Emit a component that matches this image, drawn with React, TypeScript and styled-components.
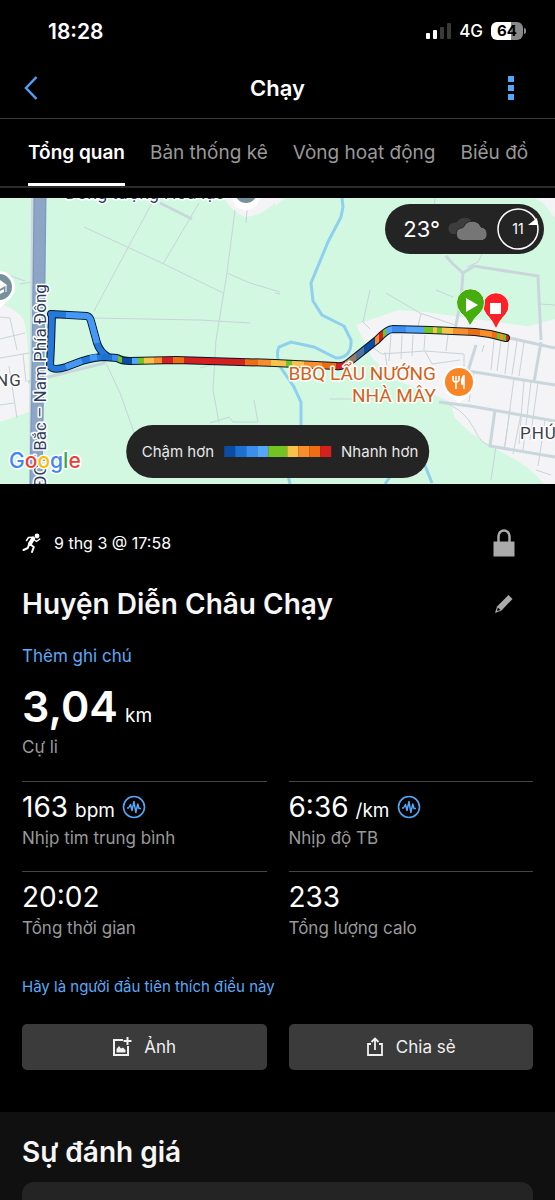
import React from "react";
import styled, { createGlobalStyle } from "styled-components";

const GlobalStyle = createGlobalStyle`
  *, *::before, *::after { box-sizing: border-box; }
  body {
    margin: 0;
    background: #000;
    color: #fff;
    font-family: Inter, "Liberation Sans", sans-serif;
  }
  button { font: inherit; color: inherit; background: none; border: 0; padding: 0; cursor: pointer; }
  a { color: #5aabf8; text-decoration: none; }
  h1, h2, p, dl, dt, dd { margin: 0; }
  svg { display: block; }
`;

const Page = styled.div`
  min-height: 100vh;
  display: flex;
  flex-direction: column;
  overflow: hidden;
`;

const StatusBar = styled.div`
  display: flex;
  align-items: center;
  justify-content: space-between;
  height: 62px;
  padding: 0 29px 0 48px;
`;

const Clock = styled.time`
  font-size: 21px;
  font-weight: 600;
`;

const StatusIcons = styled.div`
  display: flex;
  align-items: center;
  gap: 8px;
  font-size: 17px;
  font-weight: 500;
`;

const Battery = styled.span`
  position: relative;
  width: 32px;
  height: 18px;
  margin-right: 3px;
  border-radius: 6px;
  background: linear-gradient(90deg, #fff 64%, #888 64%);
  color: #000;
  font-size: 15px;
  font-weight: 700;
  line-height: 18px;
  text-align: center;

  &::after {
    content: "";
    position: absolute;
    right: -3px;
    top: 6px;
    width: 2px;
    height: 6px;
    border-radius: 0 2px 2px 0;
    background: #888;
  }
`;

const Header = styled.header`
  display: grid;
  grid-template-columns: 40px 1fr 40px;
  align-items: center;
  height: 57px;
  padding: 0 20px 4px;
  border-bottom: 1px solid #3c3c3c;
`;

const Title = styled.h1`
  font-size: 22px;
  font-weight: 600;
  line-height: 28px;
  text-align: center;
`;

const HeaderButton = styled.button<{ $end?: boolean }>`
  display: flex;
  height: 32px;
  align-items: center;
  justify-content: ${(p) => (p.$end ? "center" : "flex-start")};
  padding: ${(p) => (p.$end ? "0 8px 0 0" : "0 4px")};
`;

const Tabs = styled.nav`
  display: flex;
  gap: 25px;
  height: 69px;
  padding: 0 24px 0 28px;
  border-bottom: 2px solid #2c2c2c;
`;

const Tab = styled.button<{ $active?: boolean }>`
  height: 67px;
  padding-top: 3px;
  border-bottom: 3px solid ${(p) => (p.$active ? "#fff" : "transparent")};
  color: ${(p) => (p.$active ? "#fff" : "#999")};
  font-size: 19px;
  font-weight: ${(p) => (p.$active ? 600 : 400)};
  white-space: nowrap;
`;

const MapPanel = styled.section`
  position: relative;
  margin-top: 10px;
  overflow: hidden;
`;

const MapDrawing = styled.svg`
  width: 100%;
  height: auto;
`;

const Weather = styled.div`
  position: absolute;
  top: 6px;
  right: 11px;
  display: flex;
  align-items: center;
  gap: 7px;
  height: 50px;
  padding: 0 4px 0 18px;
  border-radius: 25px;
  background: #242424;
  font-size: 22px;
`;

const Legend = styled.div`
  position: absolute;
  left: 50%;
  bottom: 6px;
  transform: translateX(-50%);
  display: flex;
  align-items: center;
  gap: 10px;
  height: 53px;
  padding: 0 11px 0 16px;
  border-radius: 27px;
  background: #242424;
  color: #e8e8e8;
  font-size: 15px;
  white-space: nowrap;
`;

const Scale = styled.span`
  display: flex;
`;

const Swatch = styled.i<{ $color: string; $wide?: boolean }>`
  width: ${(p) => (p.$wide ? 19 : 11)}px;
  height: 11px;
  background: ${(p) => p.$color};
`;

const Summary = styled.main`
  display: flex;
  flex-direction: column;
  padding: 43px 22px 42px;
`;

const Row = styled.div`
  display: flex;
  align-items: center;
  justify-content: space-between;
`;

const When = styled.p`
  display: flex;
  align-items: center;
  gap: 13px;
  font-size: 16px;
  line-height: 32px;
`;

const IconButton = styled.button`
  display: flex;
  align-items: center;
  justify-content: center;
  width: 58px;
  height: 32px;
`;

const Heading = styled.h2`
  font-size: 28px;
  font-weight: 600;
  line-height: 40px;
  color: #f6f6f6;
`;

const NameRow = styled(Row)`
  margin-top: 25px;
`;

const NoteLink = styled.a`
  margin-top: 20px;
  font-size: 17px;
  line-height: 24px;
`;

const Stat = styled.div<{ $lead?: boolean }>`
  display: flex;
  flex-direction: column;
  height: ${(p) => (p.$lead ? "auto" : "90px")};
  padding-top: ${(p) => (p.$lead ? 10 : 7)}px;
  border-top: ${(p) => (p.$lead ? "0" : "1px solid #444")};
`;

const Value = styled.dd<{ $lead?: boolean }>`
  display: flex;
  align-items: baseline;
  gap: 7px;
  height: ${(p) => (p.$lead ? 56 : 36)}px;
  font-size: ${(p) => (p.$lead ? 43 : 28)}px;
  font-weight: ${(p) => (p.$lead ? 600 : 400)};
  line-height: ${(p) => (p.$lead ? 56 : 36)}px;
`;

const Unit = styled.span`
  font-size: 19px;
  font-weight: 400;
  line-height: 24px;
`;

const Label = styled.dt`
  order: 1;
  color: #999;
  font-size: 17px;
  line-height: 26px;
`;

const PulseBadge = styled.svg`
  align-self: center;
`;

const StatGrid = styled.dl`
  display: grid;
  grid-template-columns: 1fr 1fr;
  column-gap: 22px;
  margin-top: 21px;
`;

const LikeLink = styled.a`
  margin-top: 14px;
  font-size: 15px;
  line-height: 24px;
`;

const Actions = styled.div`
  display: grid;
  grid-template-columns: 1fr 1fr;
  gap: 22px;
  margin-top: 25px;
`;

const ActionButton = styled.button`
  display: flex;
  align-items: center;
  justify-content: center;
  gap: 12px;
  height: 46px;
  border-radius: 5px;
  background: #3b3b3b;
  color: #f0f0f0;
  font-size: 17px;
`;

const Review = styled.section`
  flex: 1;
  padding: 20px 22px 0;
  background: #101010;
`;

const ReviewCard = styled.div`
  height: 60px;
  margin-top: 10px;
  margin-bottom: -43px;
  border-radius: 12px;
  background: #242424;
`;

const PACE = ["#0a4da2", "#1b70d0", "#3b8ef0", "#55a5fb", "#74c322", "#f8c24a", "#f98c2b", "#ee6c12", "#d6201f"];

/* Pace bands along the straight part of the run: [end x, colour] */
const BANDS: [number, string][] = [
  [112, PACE[1]], [118, PACE[2]], [122, PACE[4]], [132, PACE[0]], [138, PACE[3]], [144, PACE[4]],
  [154, PACE[5]], [162, PACE[6]], [173, PACE[8]], [184, PACE[7]], [245, PACE[8]], [258, PACE[7]],
  [271, PACE[6]], [286, PACE[5]], [292, PACE[4]], [304, PACE[5]], [322, PACE[6]], [336, PACE[7]],
  [345, PACE[8]], [350, "#c09070"], [356, "#9a7a6a"], [364, "#52709c"], [375, PACE[0]], [379, PACE[6]],
  [383, PACE[8]], [386, PACE[4]], [392, PACE[3]], [406, PACE[2]], [424, PACE[3]], [433, PACE[4]],
  [437, PACE[5]], [442, PACE[4]], [453, PACE[5]], [468, PACE[6]], [480, PACE[7]], [492, PACE[6]],
  [497, PACE[7]], [500, PACE[4]], [503, PACE[6]], [506, PACE[4]], [510, PACE[8]],
];
const X0 = 100;
const X1 = 510;

function PaceGradient() {
  let start = X0;
  return (
    <linearGradient id="pace" gradientUnits="userSpaceOnUse" x1={X0} y1="0" x2={X1} y2="0">
      {BANDS.map(([end, color], i) => {
        const from = (start - X0) / (X1 - X0);
        const to = (end - X0) / (X1 - X0);
        start = end;
        return (
          <React.Fragment key={i}>
            <stop offset={from} stopColor={color} />
            <stop offset={to} stopColor={color} />
          </React.Fragment>
        );
      })}
    </linearGradient>
  );
}

const LOOP_A = "M51 314 L87 316 Q90 317 91 321 L97 343 Q100 352 108 357";
const LOOP_B = "M52 314 L51 345 L50 366 Q53 371 66 367 L82 361 Q95 357 106 357";
const MAIN = "M104 357 L117 358 Q122 361 130 361 L176 360 L275 363 L336 366 Q343 367 348 363 L377 340 Q387 329 393 329 L430 330 L475 332 L490 334 L506 338";

function RouteMap() {
  return (
    <MapDrawing viewBox="0 198 555 286" role="img" aria-label="Bản đồ lộ trình">
      <defs><PaceGradient /></defs>
      <rect y="198" width="555" height="286" fill="#d2f8e1" />
      <g fill="#f4f3f5">
        <path d="M0 304 Q16 308 24 320 Q30 345 29 412 L0 422Z" />
        <path d="M224 198 Q232 212 245 217 Q265 216 279 198Z" />
        <path d="M356 325 L398 310 L425 312 L555 330 L555 484 L544 484 Q530 466 503 453 L487 444 Q470 434 455 418 L450 402 L435 395 L395 380 L372 358Z" />
        <path d="M505 338 L530 326 L555 319 L555 350Z" />
        <path d="M275 198 L285 198 L275 206Z M535 198 L555 198 L555 218 L544 204Z" />
      </g>
      <g fill="none" stroke="#c8d4da" strokeWidth="1">
        <path d="M84 227 L164 264 L223 293 M152 203 L94 311 M199 203 L163 264 M92 318 L200 320 L250 323 M235 210 L227 273 L216 340 L213 390 L219 423 M227 273 L250 283 L280 292 M247 210 L246 223 M105 361 L120 393 L135 435 M200 368 L214 364 M210 423 L229 417 L233 422 L258 422 L254 400" />
        <path d="M0 272 L25 281 M20 284 L32 282 M0 317 L10 318 L17 350 M0 339 L25 333 M0 358 L29 353 M9 366 L17 418 M0 405 L14 403 M23 354 L26 382 M330 399 L372 399 M275 293 L280 294 M370 290 L363 322 L370 329 M386 293 L420 313 L455 325 M436 290 L453 297 M435 198 L432 230 M483 252 L478 262 L467 267 M540 304 L555 305" />
        <path d="M421 314 L417 330 M391 335 L389 361 M402 335 L401 359 M413 335 L412 356 M425 335 L424 350 M448 335 L446 351 M372 347 L382 354 L425 351 L464 354 L464 370 M385 352 L387 366 M425 351 L432 364 L460 360 M494 340 L491 370 M501 341 L497 371 M509 340 L505 374 M517 341 L512 375 M524 342 L519 376 M484 345 L482 352 M538 382 L530 440 M524 380 L519 444 M514 378 L505 446 M531 382 L523 450 M474 372 L469 402 M510 410 L504 450 M521 414 L513 454 M545 420 L538 466 M496 446 L491 480 M536 470 L551 475" />
      </g>
      <g fill="none" stroke="#c9d7dc" strokeWidth="3">
        <path d="M160 203 L192 219 M446 256 L452 263 L463 273 L461 300 L455 330 M463 273 L474 266 L538 276 L541 340" />
        <path d="M505 337 L555 348 M468 371 L555 385 M439 402 L470 406 L555 421 M476 345 L468 371 M541 342 L534 382 M495 410 L490 446 L555 457 M105 363 L60 374 L28 382" />
        <path d="M439 402 Q462 405 475 430 Q480 444 492 446" strokeWidth="1" />
      </g>
      <g fill="none" stroke="#8fd0ee" strokeWidth="3">
        <path d="M342 198 L343 207 L341 217 L328 242 L311 283 L313 301 L322 315 L344 326 L351 340 Q352 358 336 358 L314 347 L291 342 L279 347 Q276 352 279 365 L294 387 L301 402 L301 430 L297 444 L284 458 L290 484 M385 484 L392 474 Q410 462 424 463 L432 483" />
      </g>
      <path d="M33 198 L31 484" stroke="#d0d7de" strokeWidth="4" />
      <path d="M40 198 L38 360 L36 484" stroke="#7f9bc0" strokeWidth="13" fill="none" />
      <path d="M40 198 L38 360 L36 484" stroke="#8ea6c6" strokeWidth="10" fill="none" />
      <circle cx="246" cy="196" r="14" fill="#fff" />
      <path d="M236 203 L246 211 L256 203Z" fill="#fff" />
      <circle cx="246" cy="192" r="11" fill="#78909c" />
      <path d="M-12 300 L0 308 L10 299Z" fill="#fff" />
      <circle cx="-1" cy="287" r="16" fill="#fff" />
      <circle cx="-1" cy="287" r="13" fill="#78909c" />
      <path d="M-8 285 L0 280 L7 285 L0 289Z M-4 289 L0 291 L4 289 V292 L0 294 L-4 292Z" fill="#fff" />
      <path d="M6 285 V292" stroke="#fff" strokeWidth="1" />

      <text x="65" y="199" fontSize="18" fontFamily="Roboto, Inter, sans-serif" fill="#30405c" stroke="#fff" strokeWidth="3" paintOrder="stroke" strokeLinejoin="round">Đồng tượng Hoa lạc</text>
      <g fill="none" strokeLinejoin="round" strokeLinecap="round">
        <path d={LOOP_B + LOOP_A + MAIN} stroke="#061828" strokeWidth="8" />
        <path d={LOOP_B + LOOP_A} stroke="#2478dc" strokeWidth="6" />
        <path d="M66 315 L87 316 Q90 317 91 321 L97 343 M66 367 L82 361 M90 358 L97 357" stroke="#4598f5" strokeWidth="6" strokeLinecap="butt" />
        <path d={MAIN} stroke="url(#pace)" strokeWidth="6" />
      </g>
      <g fontFamily="Roboto, Inter, sans-serif" stroke="#fff" strokeWidth="3" paintOrder="stroke" strokeLinejoin="round">
        <text transform="translate(46 487) rotate(-90)" fontSize="17" fill="#2d3c5c">ĐCT Bắc – Nam Phía Đông</text>
        <g fontSize="19" fill="#d4601a" textAnchor="end">
          <text x="436" y="380">BBQ LẨU NƯỚNG</text>
          <text x="436" y="402">NHÀ MÂY</text>
        </g>
        <g fontSize="17" fill="#3a3f48" letterSpacing="1">
          <text x="-4" y="386">NG</text>
          <text x="520" y="439">PHÚ</text>
        </g>
      </g>
      <path d="M445 392 L459 403 L473 392Z" fill="#fff" />
      <circle cx="459" cy="382" r="16" fill="#fff" />
      <circle cx="459" cy="382" r="14" fill="#f98527" />
      <path d="M453 376 V379 Q453 382 456 382 Q459 382 459 379 V376 M456 376 V389" fill="none" stroke="#fff" strokeWidth="1.6" />
      <path d="M464 375 V389 M463 377 Q461 380 462 384 H464Z" fill="#fff" stroke="#fff" strokeWidth="1.6" />
      <path d="M496 329 Q493 321 486 314 A13 13 0 1 1 506 314 Q499 321 496 329Z" fill="#ff2128" stroke="#f4fff8" strokeWidth="1" />
      <rect x="490" y="303" width="11" height="11" fill="#fff" />
      <path d="M470 326 Q467 318 460 312 A14 14 0 1 1 481 312 Q474 318 470 326Z" fill="#45ae0c" stroke="#f4fff8" strokeWidth="1" />
      <path d="M466 298 L478 305 L466 312Z" fill="#fff" />
      <text x="9" y="468" fontFamily="Inter, sans-serif" fontSize="21" fontWeight="500" stroke="#fff" strokeWidth="3" paintOrder="stroke" strokeLinejoin="round">
        <tspan fill="#4285f4">G</tspan><tspan fill="#ea4335">o</tspan><tspan fill="#fbbc05">o</tspan><tspan fill="#4285f4">g</tspan><tspan fill="#34a853">l</tspan><tspan fill="#ea4335">e</tspan>
      </text>
    </MapDrawing>
  );
}

function CloudIcon() {
  return (
    <svg width="43" height="24" viewBox="0 0 43 24" aria-hidden="true">
      <path d="M5 17 A6 6 0 0 1 5 6 L10 5 A9 8 0 0 1 24 3 L20 17Z" fill="#3d3d3d" />
      <path d="M15 23.500 A6.500 6.500 0 0 1 13.500 11 Q16 11 16.500 10 A9.500 9.500 0 0 1 34 10 A7 7 0 0 1 35.500 23.500Z" fill="#767676" stroke="#242424" strokeWidth="1" />
    </svg>
  );
}

function WindDial() {
  return (
    <svg width="43" height="43" viewBox="0 0 43 43" role="img" aria-label="Gió 11">
      <circle cx="21" cy="21" r="20" fill="none" stroke="#fff" strokeWidth="1.5" />
      <path d="M31 17 L40 10 L41 17Z" fill="#fff" />
      <text x="21" y="26" fill="#fff" fontSize="14" fontFamily="Inter, sans-serif" textAnchor="middle">11</text>
    </svg>
  );
}

function Pulse() {
  return (
    <PulseBadge width="24" height="24" viewBox="0 0 24 24" fill="none" stroke="#55a5f5" aria-hidden="true">
      <circle cx="12" cy="12" r="10.5" strokeWidth="1.6" />
      <path d="M5 13 H6.500 L8.500 9.500 L10 15.500 L12 6.500 L13.800 17.500 L15.800 9 L17 13.500 H19" strokeWidth="1.5" strokeLinejoin="round" />
    </PulseBadge>
  );
}

function RunnerIcon() {
  return (
    <svg width="19" height="20" viewBox="0 0 19 20" fill="none" stroke="#fff" strokeLinecap="round" strokeLinejoin="round" aria-hidden="true">
      <circle cx="15" cy="3" r="2.400" fill="#fff" stroke="none" />
      <path d="M11.200 5.500 L7.800 11" strokeWidth="4" />
      <path d="M11 4.300 L6.500 4.500 L4.500 7.500 M12.500 7 L14.500 8.500 L17.800 6" strokeWidth="1.500" />
      <path d="M8.500 11.500 L11.800 14 L10 19" strokeWidth="2" />
      <path d="M7 11.500 L5.800 15 L1.500 17" strokeWidth="2" />
    </svg>
  );
}

const stats = [
  { label: "Nhịp tim trung bình", value: "163", unit: "bpm" },
  { label: "Nhịp độ TB", value: "6:36", unit: "/km" },
  { label: "Tổng thời gian", value: "20:02" },
  { label: "Tổng lượng calo", value: "233" },
];

export default function App() {
  return (
    <Page>
      <GlobalStyle />
      <StatusBar>
        <Clock>18:28</Clock>
        <StatusIcons>
          <svg width="25" height="16" viewBox="0 0 25 16" aria-hidden="true">
            <rect x="0" y="10" width="4" height="6" rx="1" fill="#fff" />
            <rect x="7" y="7" width="4" height="9" rx="1" fill="#fff" />
            <rect x="14" y="4" width="4" height="12" rx="1" fill="#3a3a3a" />
            <rect x="21" y="0" width="4" height="16" rx="1" fill="#3a3a3a" />
          </svg>
          <span>4G</span>
          <Battery>64</Battery>
        </StatusIcons>
      </StatusBar>
      <Header>
        <HeaderButton aria-label="Quay lại">
          <svg width="14" height="24" viewBox="0 0 14 24" fill="none" stroke="#4fa0f5" strokeWidth="2.500"><path d="M12.500 1 L2 12 L12.500 23" /></svg>
        </HeaderButton>
        <Title>Chạy</Title>
        <HeaderButton $end aria-label="Tùy chọn khác">
          <svg width="22" height="26" viewBox="0 0 22 26" fill="#55a5f8">
            <path d="M8 1h6v6H8z M8 10h6v6H8z M8 19h6v6H8z" />
          </svg>
        </HeaderButton>
      </Header>
      <Tabs>
        <Tab $active>Tổng quan</Tab>
        <Tab>Bản thống kê</Tab>
        <Tab>Vòng hoạt động</Tab>
        <Tab>Biểu đồ</Tab>
      </Tabs>
      <MapPanel>
        <RouteMap />
        <Weather>
          <span>23°</span>
          <CloudIcon />
          <WindDial />
        </Weather>
        <Legend>
          <span>Chậm hơn</span>
          <Scale>
            {PACE.map((color, i) => <Swatch key={color} $color={color} $wide={i === 4} />)}
          </Scale>
          <span>Nhanh hơn</span>
        </Legend>
      </MapPanel>
      <Summary>
        <Row>
          <When><RunnerIcon /> 9 thg 3 @ 17:58</When>
          <IconButton aria-label="Quyền riêng tư">
            <svg width="22" height="28" viewBox="0 0 22 28">
              <path d="M5.500 13 V7 a5.500 5.500 0 0 1 11 0 V13" fill="none" stroke="#aaa" strokeWidth="2.500" />
              <path d="M0.500 12.500h21v15h-21z" fill="#aaa" />
            </svg>
          </IconButton>
        </Row>
        <NameRow>
          <Heading>Huyện Diễn Châu Chạy</Heading>
          <IconButton aria-label="Sửa tên">
            <svg width="20" height="20" viewBox="0 0 20 20">
              <path d="M14.500 1 L18.500 5 L7.500 16.500 L1 19 L3 12.500Z" fill="#aaa" />
              <path d="M3.800 13.500 L6.500 16 L3 17Z" fill="#000" />
            </svg>
          </IconButton>
        </NameRow>
        <NoteLink href="#note">Thêm ghi chú</NoteLink>
        <dl>
          <Stat $lead>
            <Label>Cự li</Label>
            <Value $lead>3,04 <Unit>km</Unit></Value>
          </Stat>
        </dl>
        <StatGrid>
          {stats.map((s) => (
            <Stat key={s.label}>
              <Label>{s.label}</Label>
              <Value>{s.value}{s.unit && <><Unit>{s.unit}</Unit><Pulse /></>}</Value>
            </Stat>
          ))}
        </StatGrid>
        <LikeLink href="#like">Hãy là người đầu tiên thích điều này</LikeLink>
        <Actions>
          <ActionButton>
            <svg width="20" height="20" viewBox="0 0 20 20" fill="none" stroke="#f0f0f0" strokeWidth="2">
              <path d="M11 3 H2 V18 H16 V9 M15.500 0 V8 M11.500 4 H19.500" />
              <path d="M4.500 15.500 V12 L7 9 L9 11.500 L11 10.500 L13.500 13 V15.500Z" fill="#f0f0f0" stroke="none" />
            </svg>
            Ảnh
          </ActionButton>
          <ActionButton>
            <svg width="18" height="20" viewBox="0 0 18 20" fill="none" stroke="#f0f0f0" strokeWidth="1.800">
              <path d="M5 7 H2 V18 H16 V7 H13 M9 13 V2 M5.500 5 L9 1.500 L12.500 5" />
            </svg>
            Chia sẻ
          </ActionButton>
        </Actions>
      </Summary>
      <Review>
        <Heading>Sự đánh giá</Heading>
        <ReviewCard />
      </Review>
    </Page>
  );
}
